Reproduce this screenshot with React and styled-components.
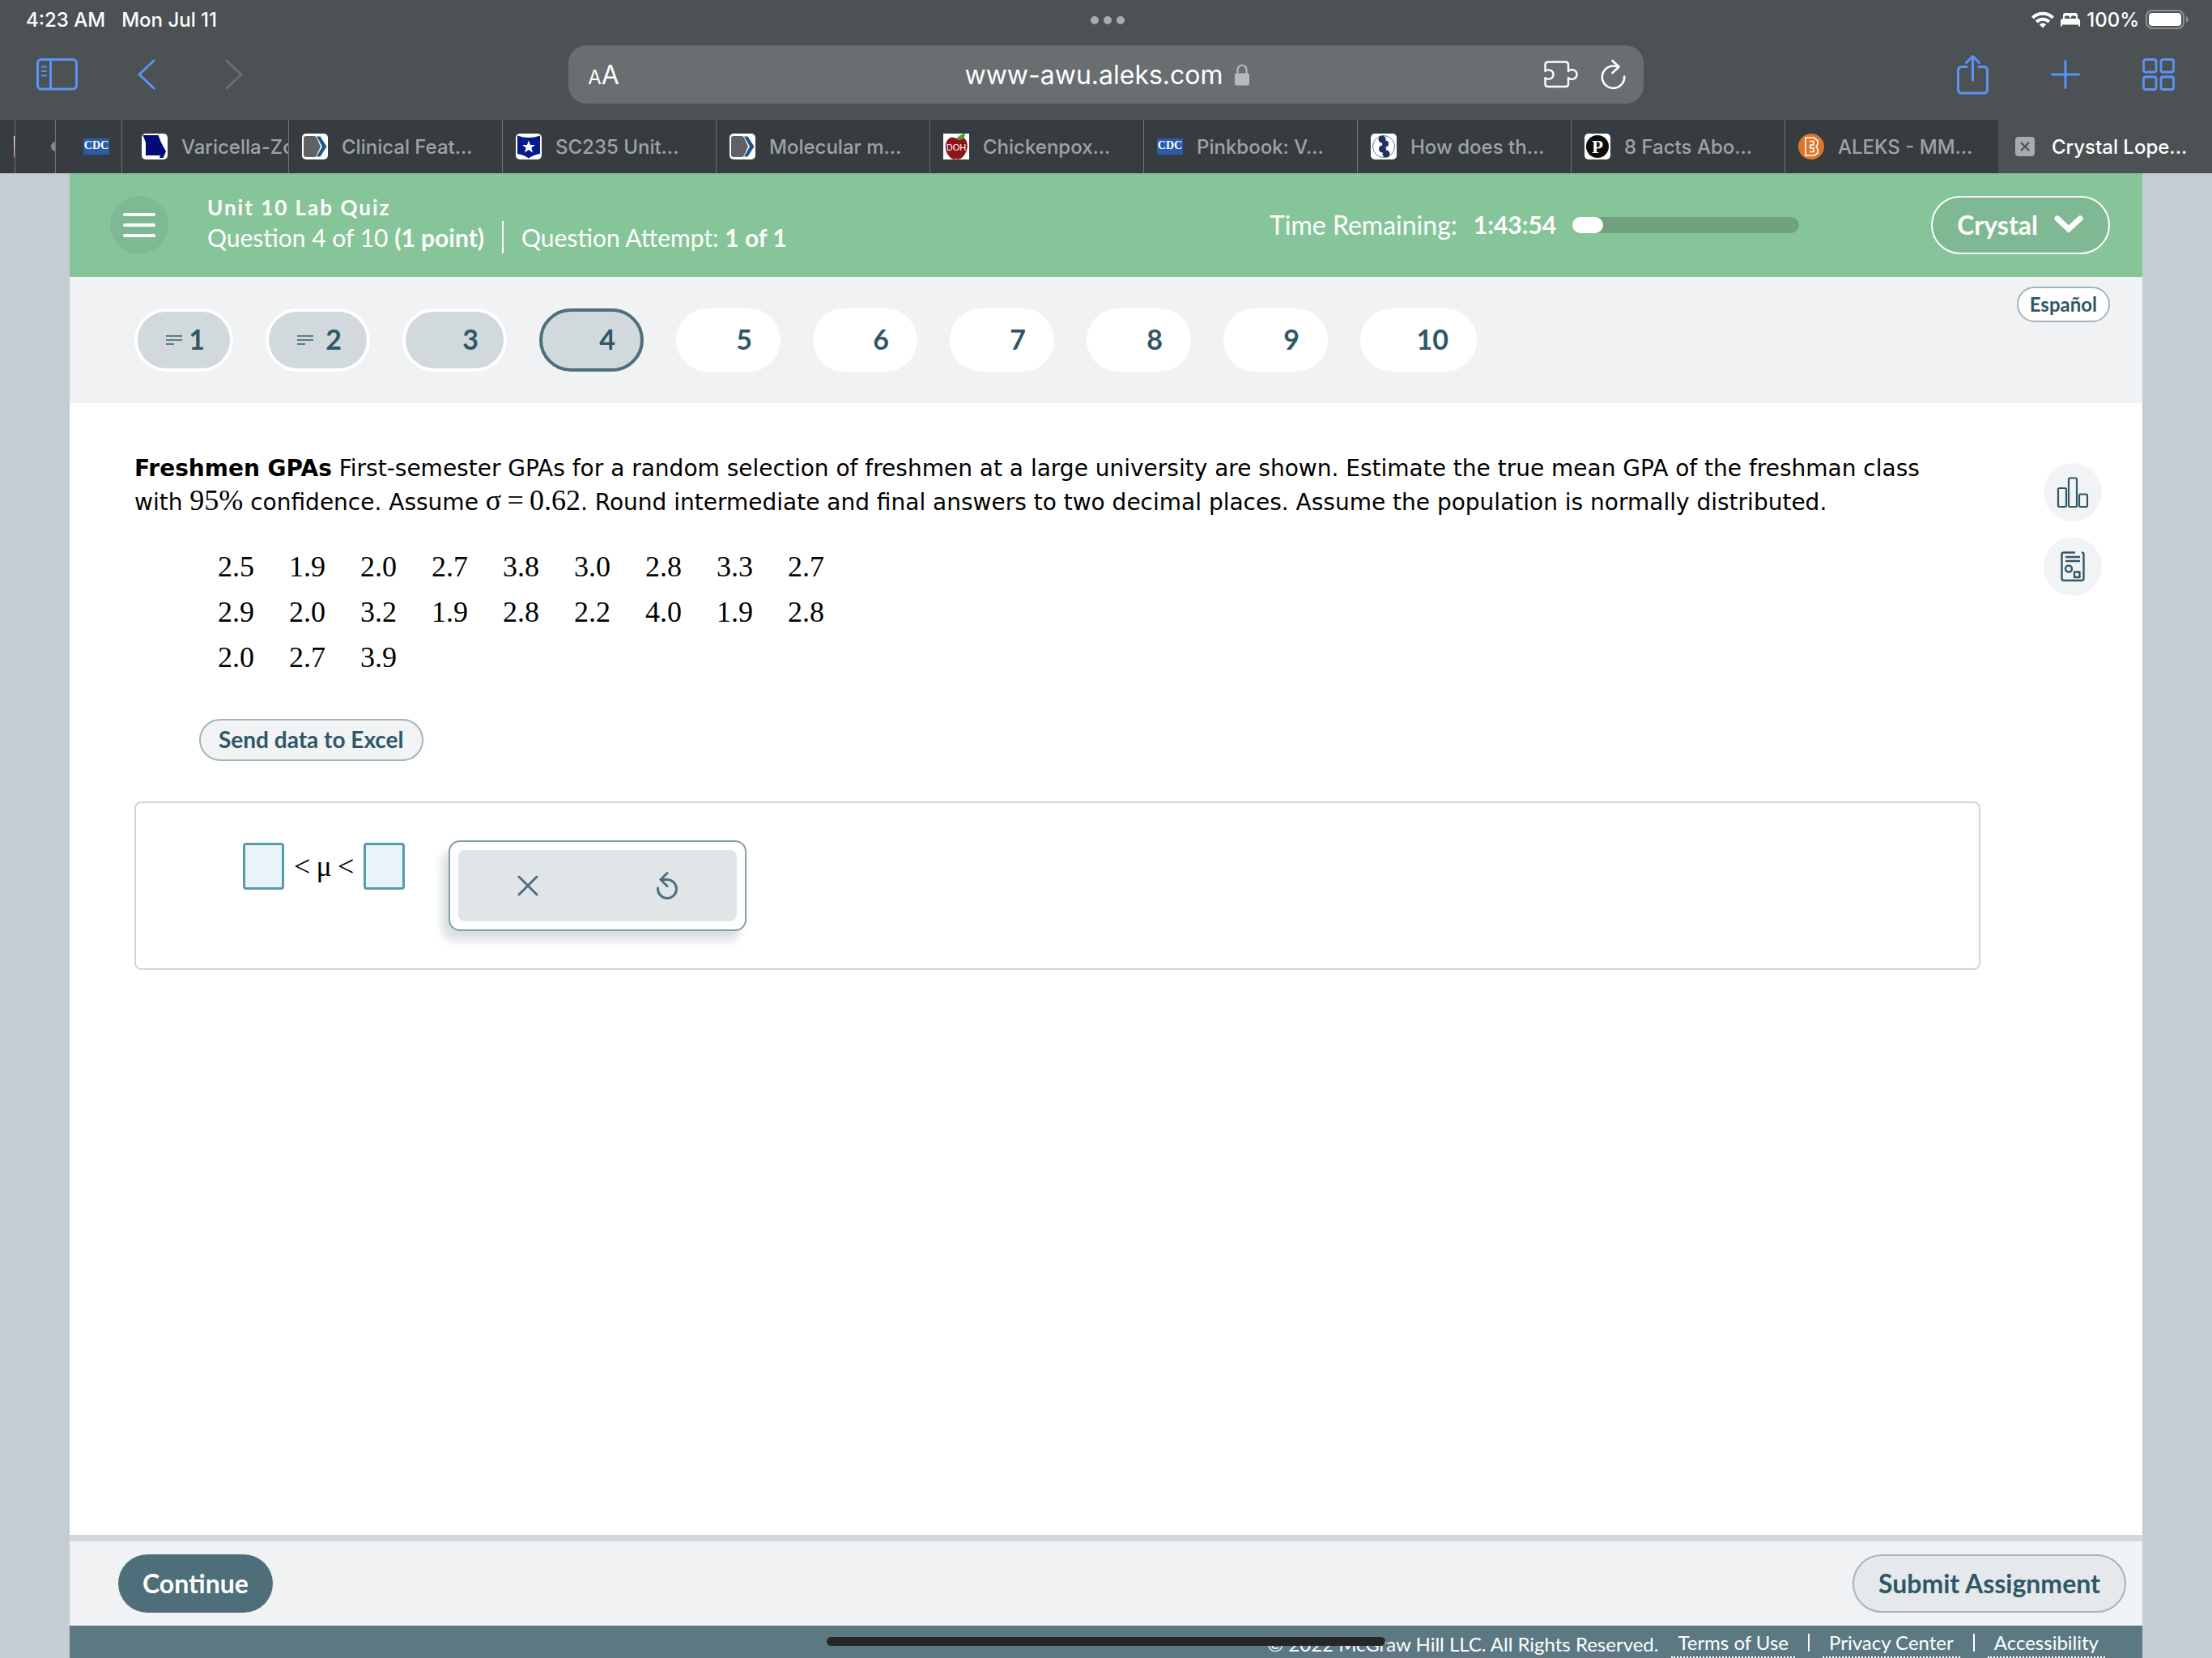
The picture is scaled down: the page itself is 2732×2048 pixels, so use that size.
import React from "react";
import styled, { createGlobalStyle, css } from "styled-components";

const SYSTEM = `Inter, "Liberation Sans", sans-serif`;
const BRAND = `Lato, "Liberation Sans", sans-serif`;
const BODY = `"DejaVu Sans", Verdana, sans-serif`;
const MATH = `"Liberation Serif", "Times New Roman", serif`;

const ink = "#2f5767";
const blue = "#5b93f7";

const GlobalStyle = createGlobalStyle`
  *, *::before, *::after { box-sizing: border-box; }
  body { margin: 0; background: #c3cdd2; font-family: ${BRAND}; }
  button { font: inherit; color: inherit; padding: 0; border: 0; background: none; cursor: pointer; }
  svg { display: block; flex: none; }
`;

const Page = styled.div`
  position: relative;
  display: flex;
  flex-direction: column;
  min-height: 100vh;
  overflow: hidden;
`;

/* ---------- browser chrome ---------- */

const Chrome = styled.header`
  background: #4c5154;
  color: #fff;
  font-family: ${SYSTEM};
`;

const StatusBar = styled.div`
  display: grid;
  grid-template-columns: 1fr auto 1fr;
  align-items: center;
  height: 48px;
  padding: 0 28px 0 32px;
  font-size: 24px;
  font-weight: 500;
`;

const StatusGroup = styled.div`
  display: flex;
  align-items: center;
  gap: ${(p) => p.$gap}px;
  justify-content: ${(p) => (p.$end ? "flex-end" : "flex-start")};
`;

const Toolbar = styled.nav`
  display: grid;
  grid-template-columns: 1fr 48.6% 1fr;
  align-items: center;
  padding: 8px 0 20px;
`;

const ToolGroup = styled.div`
  display: flex;
  align-items: center;
  justify-content: ${(p) => (p.$end ? "flex-end" : "flex-start")};
  gap: ${(p) => (p.$end ? 67 : 60)}px;
  padding: 0 42px 0 45px;
`;

const ToolButton = styled.button`
  display: flex;
  justify-content: center;
  min-width: 48px;
`;

const AddressBar = styled.div`
  display: grid;
  grid-template-columns: 1fr auto 1fr;
  align-items: center;
  height: 72px;
  padding: 0 22px 0 24px;
  border-radius: 22px;
  background: #696e70;
`;

const ReaderButton = styled.button`
  justify-self: start;
  font-size: 32px;
  small { font-size: 24px; }
`;

const UrlButton = styled.button`
  display: flex;
  align-items: center;
  gap: 14px;
  font-size: 32px;
`;

const AddressActions = styled.div`
  display: flex;
  align-items: center;
  justify-content: flex-end;
  gap: 28px;
`;

const TabStrip = styled.div`
  display: flex;
  height: 66px;
  background: #363c3f;
`;

const Tab = styled.button`
  display: flex;
  align-items: center;
  flex: ${(p) => (p.$width ? `0 0 ${p.$width}px` : "1 1 200px")};
  min-width: 0;
  gap: 17px;
  padding-left: ${(p) => p.$inset ?? 16}px;
  overflow: hidden;
  white-space: nowrap;
  font-size: 24px;
  font-weight: 500;
  color: #9da4a7;
  & + & { border-left: 1px solid #6d7679; }
  ${(p) =>
    p.$active &&
    css`
      gap: 21px;
      color: #fff;
      background: #4c5154;
      && { border-left-color: #4c5154; }
    `}
`;

const CdcBadge = styled.span`
  flex: none;
  width: 32px;
  height: 20px;
  font: 700 14px/18px ${MATH};
  text-align: center;
  color: #fff;
  background: #2c5ba9;
`;

const HiddenMark = styled.span`
  flex: none;
  width: ${(p) => p.$width}px;
  height: ${(p) => p.$height}px;
  border-radius: ${(p) => p.$radius};
  background: ${(p) => p.$fill};
`;

/* ---------- quiz ---------- */

const Sheet = styled.div`
  flex: 1;
  display: flex;
  flex-direction: column;
  width: calc(100% - 172px);
  margin: 0 auto;
  background: #fff;
  color: ${ink};
`;

const QuizHeader = styled.header`
  display: flex;
  align-items: center;
  height: 128px;
  padding: 0 40px 0 50px;
  background: #86c59a;
  color: #fff;
  font-size: 30px;
`;

const MenuButton = styled.button`
  display: grid;
  place-items: center;
  width: 72px;
  height: 72px;
  border-radius: 50%;
  background: #7fb993;
`;

const QuizTitles = styled.div`
  flex: 1;
  margin-left: 48px;
  padding-bottom: 4px;
`;

const QuizName = styled.h1`
  margin: 0;
  font-size: 26px;
  line-height: 34px;
  font-weight: 700;
  letter-spacing: 2px;
`;

const QuizMeta = styled.div`
  display: flex;
  line-height: 40px;
  span + span {
    margin-left: 22px;
    padding-left: 22px;
    border-left: 2px solid #fff;
  }
`;

const Timer = styled.div`
  display: flex;
  align-items: center;
  gap: 20px;
`;

const TimeLabel = styled.span`
  padding-bottom: 2px;
  font-size: 32px;
`;

const TimeLeft = styled.b`
  padding-bottom: 2px;
`;

const TimeTrack = styled.div`
  width: 280px;
  height: 20px;
  border-radius: 10px;
  background: #71a17f;
`;

const TimeFill = styled.div`
  height: 20px;
  border-radius: 10px;
  background: #fff;
`;

const UserButton = styled.button`
  display: flex;
  align-items: center;
  gap: 20px;
  height: 72px;
  margin-left: 163px;
  padding: 0 31px 2px 30px;
  border: 2px solid #fff;
  border-radius: 36px;
  background: #7fb993;
  font-size: 32px;
  font-weight: 700;
`;

const QuestionNav = styled.nav`
  display: flex;
  justify-content: space-between;
  align-items: flex-start;
  height: 156px;
  padding: 0 40px 0 80px;
  background: #f0f2f4;
`;

const PillList = styled.div`
  display: flex;
  gap: 40px;
  padding-top: 39px;
`;

const Pill = styled.button`
  display: flex;
  align-items: center;
  justify-content: space-between;
  width: ${(p) => p.$width}px;
  height: 78px;
  padding: 0 31px 0 35px;
  border: 4px solid ${(p) => (p.$current ? "#4e6e79" : "#fff")};
  border-radius: 39px;
  background: ${(p) => (p.$seen ? "#d1d9dc" : "#fff")};
  font-size: 34px;
  font-weight: 700;
  color: ${ink};
`;

const PillNumber = styled.span`
  margin-left: auto;
  padding-bottom: 4px;
`;

const OutlineButton = styled.button`
  height: ${(p) => p.$height}px;
  padding: 0 ${(p) => p.$pad}px 2px;
  border: 2px solid #a3b5bc;
  border-radius: 36px;
  background: ${(p) => p.$fill};
  font-size: ${(p) => p.$size}px;
  font-weight: 700;
  color: ${ink};
`;

const LanguageSlot = styled.div`
  padding-top: 12px;
`;

const Workspace = styled.main`
  flex: 1;
  display: flex;
  justify-content: space-between;
  gap: 78px;
  padding: 60px 50px 0 80px;
`;

const Problem = styled.section`
  flex: 1;
  min-width: 0;
`;

const Prompt = styled.p`
  margin: 0 0 30px;
  padding-right: 50px;
  font: 28px/42px ${BODY};
  color: #000;
`;

const Formula = styled.span`
  font: 36px/36px ${MATH};
`;

const DataTable = styled.table`
  margin-left: 103px;
  border-collapse: collapse;
  font: 36px/56px ${MATH};
  color: #000;
  td { width: 88px; padding: 0; }
`;

const ExportRow = styled.div`
  padding: 48px 0 50px 80px;
`;

const AnswerBox = styled.form`
  display: flex;
  align-items: flex-start;
  gap: 54px;
  padding: 46px 132px;
  border: 2px solid #cfd7da;
  border-radius: 8px;
`;

const Interval = styled.div`
  display: flex;
  align-items: center;
  gap: 12px;
  padding-top: 3px;
  font: 36px/58px ${MATH};
  color: #000;
`;

const AnswerInput = styled.input`
  width: 51px;
  height: 58px;
  padding: 4px;
  border: 3px solid #559cab;
  border-radius: 4px;
  background: #e8f4fa;
  font: 30px ${MATH};
  text-align: center;
`;

const Keypad = styled.div`
  display: flex;
  width: 368px;
  height: 112px;
  padding: 10px;
  border: 2px solid #84a0aa;
  border-radius: 14px;
  background: #fff;
  box-shadow: -8px 12px 12px #d9dfe2;
`;

const Key = styled.button`
  flex: 1;
  display: grid;
  place-items: center;
  background: #e0e5e7;
  &:first-child { border-radius: 8px 0 0 8px; }
  &:last-child { border-radius: 0 8px 8px 0; }
`;

const SideTools = styled.aside`
  display: flex;
  flex-direction: column;
  gap: 20px;
  padding-top: 14px;
`;

const SideButton = styled.button`
  display: grid;
  place-items: center;
  width: 72px;
  height: 72px;
  border-radius: 50%;
  background: #f2f3f5;
`;

const ActionBar = styled.div`
  display: flex;
  align-items: center;
  justify-content: space-between;
  height: 112px;
  padding: 0 20px 0 60px;
  border-top: 8px solid #d1d9db;
  background: #f0f2f4;
`;

const PrimaryButton = styled.button`
  height: 72px;
  padding: 0 30px 2px;
  border-radius: 36px;
  background: #4e6e79;
  color: #fff;
  font-size: 32px;
  font-weight: 700;
`;

const Legal = styled.footer`
  display: flex;
  justify-content: flex-end;
  align-items: flex-start;
  height: 40px;
  padding: 6px 46px 0 0;
  background: #5c7983;
  color: #fff;
  font-size: 24px;
  line-height: 30px;
  overflow: hidden;
`;

const Copyright = styled.span`
  margin-right: 16px;
  padding-top: 2px;
`;

const LegalLink = styled.a`
  padding: 0 8px 2px;
  border-bottom: 2px dotted #fff;
  color: inherit;
  text-decoration: none;
`;

const LegalDivider = styled.span`
  width: 2px;
  height: 22px;
  margin: 4px 16px 0;
  background: #fff;
`;

const HomeIndicator = styled.div`
  position: absolute;
  left: 50%;
  bottom: 15px;
  width: 690px;
  height: 11px;
  margin-left: -345px;
  border-radius: 6px;
  background: #262626;
`;

/* ---------- drawings ---------- */

const line = (width, color = "currentColor") => ({
  fill: "none",
  stroke: color,
  strokeWidth: width,
  strokeLinecap: "round",
  strokeLinejoin: "round",
});

const DotsIcon = () => (
  <svg width="44" height="12" fill="#a9acae">
    <circle cx="6" cy="7" r="5" /><circle cx="22" cy="7" r="5" /><circle cx="38" cy="7" r="5" />
  </svg>
);

const WifiIcon = () => (
  <svg width="28" height="21" viewBox="0 0 28 21" fill="none" stroke="#fff" strokeWidth="4">
    <path d="M1.5 8 A17.5 17.5 0 0 1 26.500 8" />
    <path d="M6.200 13 A11 11 0 0 1 21.800 13" />
    <path d="M14 20.500 L9.800 16.200 A6 6 0 0 1 18.200 16.200 Z" fill="#fff" stroke="none" />
  </svg>
);

const BedIcon = () => (
  <svg width="24" height="18" viewBox="0 0 24 18" fill="#fff">
    <path d="M3 8 V4 Q3 1 6 1 H18 Q21 1 21 4 V8 H19 V6 Q19 4.500 17.500 4.500 H14.500 Q13 4.500 13 6 V7 H11 V6 Q11 4.500 9.500 4.500 H6.500 Q5 4.500 5 6 V8 Z" />
    <path d="M0 11 Q0 8 3 8 H21 Q24 8 24 11 V17.500 H22 V15.500 H2 V17.500 H0 Z" />
  </svg>
);

const BatteryIcon = () => (
  <svg width="54" height="24" viewBox="0 0 54 24">
    <rect x="1" y="1" width="46" height="22" rx="7" fill="none" stroke="#8d9193" strokeWidth="2" />
    <rect x="4" y="4" width="40" height="16" rx="4" fill="#fff" />
    <path d="M50 8 Q53 9.500 53 12 Q53 14.500 50 16 Z" fill="#8d9193" />
  </svg>
);

const SidebarIcon = () => (
  <svg width="52" height="40" viewBox="0 0 52 40" {...line(3, blue)}>
    <rect x="1.500" y="1.500" width="48" height="36.500" rx="4.500" />
    <path d="M17.500 2 V38" />
    <path d="M7 10.500 h5 M7 16 h5 M7 21.500 h5" strokeWidth="2" />
  </svg>
);

const ChevronIcon = ({ flip, color }) => (
  <svg width="24" height="40" viewBox="0 0 24 40" {...line(3, color)}>
    <path d={flip ? "M3 3 L21 20 L3 37" : "M21 3 L3 20 L21 37"} />
  </svg>
);

const LockIcon = () => (
  <svg width="18" height="27" viewBox="0 0 18 27">
    <rect x="0" y="11.500" width="18" height="15" rx="2.500" fill="#b9babd" />
    <path d="M3.500 12 V7 a5.500 5.500 0 0 1 11 0 V12" fill="none" stroke="#b9babd" strokeWidth="2.200" />
  </svg>
);

const PuzzleIcon = () => (
  <svg width="42" height="34" viewBox="0 0 42 34" {...line(2.4)}>
    <path d="M30 13 V5 Q30 1.500 26.500 1.500 H5 Q1.500 1.500 1.500 5 V13 C3 10.500 11.500 10.500 11.500 17 C11.500 23.500 3 23.500 1.500 21 V29 Q1.500 32 5 32 H26.500 Q30 32 30 29 V21 C32 24 40.500 23.500 40.500 17 C40.500 10.500 32 10 30 13 Z" />
  </svg>
);

const ReloadIcon = () => (
  <svg width="31" height="38" viewBox="0 0 31 38" {...line(2.6)}>
    <path d="M22 9.500 Q19 8.500 15.500 8.500 A13.700 13.700 0 1 0 29.200 21.500" />
    <path d="M14.500 2 L22.500 9.500 L14.500 17" />
  </svg>
);

const ShareIcon = () => (
  <svg width="39" height="50" viewBox="0 0 39 50" {...line(3, blue)}>
    <path d="M12 15.500 H6 Q1.500 15.500 1.500 20 V43.500 Q1.500 48 6 48 H33 Q37.500 48 37.500 43.500 V20 Q37.500 15.500 33 15.500 H27" />
    <path d="M19.500 32 V3 M11.500 10.500 L19.500 2.500 L27.500 10.500" />
  </svg>
);

const PlusIcon = () => (
  <svg width="36" height="36" viewBox="0 0 36 36" {...line(3, blue)}>
    <path d="M18 1.500 V34.500 M1.500 18 H34.500" />
  </svg>
);

const GridIcon = () => (
  <svg width="40" height="40" viewBox="0 0 40 40" {...line(2.8, blue)}>
    <rect x="1.500" y="1.500" width="15.500" height="15.500" rx="2.500" />
    <rect x="23" y="1.500" width="15.500" height="15.500" rx="2.500" />
    <rect x="1.500" y="23" width="15.500" height="15.500" rx="2.500" />
    <rect x="23" y="23" width="15.500" height="15.500" rx="2.500" />
  </svg>
);

const Favicon = ({ children }) => (
  <svg width="32" height="32" viewBox="0 0 32 32">
    <rect width="32" height="32" rx="5" fill="#fff" />
    {children}
  </svg>
);

const GeorgiaIcon = () => (
  <Favicon><path d="M1.500 2 H20.500 L24 11 L30 22 L26.500 30 H22 L23 27 H5 V11 Z" fill="#020a78" /></Favicon>
);

const ChevronTagIcon = () => (
  <Favicon>
    <path d="M5 3 H15 Q17 3 18 5 L23 16 L18 27 Q17 29 15 29 H5 Q2 29 2 26 V6 Q2 3 5 3 Z" fill="#616065" />
    <path d="M18 3.500 H22.500 L30.500 16 L22.500 28.500 H18 L25 16 Z" fill="#20558f" />
  </Favicon>
);

const StarShieldIcon = () => (
  <Favicon>
    <path d="M2 2.500 Q9 5 16 5 Q23 5 30 2.500 V25 Q22 26 16 30.500 Q10 26 2 25 Z" fill="#071a8c" />
    <path d="M16 8.500 L18 14 H24 L19.300 17.500 L21 23.500 L16 20 L11 23.500 L12.700 17.500 L8 14 H14 Z" fill="#fff" />
  </Favicon>
);

const AppleIcon = () => (
  <svg width="32" height="32" viewBox="0 0 32 32">
    <rect width="32" height="32" fill="#fff" />
    <path d="M16 6 Q25 1 29 10 Q32 20 24 29 Q20 33 16 31 Q12 33 8 29 Q0 20 4 10 Q8 2 16 6 Z" fill="#8d1418" />
    <path d="M17 8 Q18 1 27 0 Q27 7 20 8 Z" fill="#4d9a35" />
    <text x="16" y="21" textAnchor="middle" fontFamily="Liberation Sans, sans-serif" fontSize="11" fill="#fff">DOH</text>
  </svg>
);

const BeadsIcon = () => (
  <Favicon>
    <circle cx="16" cy="16" r="13.500" fill="#fff" stroke="#6d789c" strokeWidth="1" />
    <g fill="#22305f"><circle cx="14" cy="7" r="4.500" /><circle cx="18" cy="12.500" r="4" /><circle cx="14.500" cy="19" r="4.500" /><circle cx="19" cy="25" r="4.500" /></g>
  </Favicon>
);

const ParadeIcon = () => (
  <Favicon>
    <circle cx="16" cy="16" r="14" fill="#0c0c0c" />
    <text x="16" y="24" textAnchor="middle" fontFamily="Liberation Serif, serif" fontWeight="700" fontSize="23" fill="#fff">P</text>
  </Favicon>
);

const BIcon = () => (
  <svg width="32" height="32" viewBox="0 0 32 32">
    <circle cx="16" cy="16" r="16" fill="#d9782d" />
    <g fill="none" stroke="#fff" strokeWidth="1.600">
      <path d="M9 5 H19 L24 9 V13 L22 16 L24 19 V24 L20 27 H9 Z" />
      <path d="M14 9.500 H19 V14 H15 V18 H19 V22.500 H14" />
    </g>
  </svg>
);

const CloseTabIcon = () => (
  <svg width="24" height="24" viewBox="0 0 24 24">
    <rect width="24" height="24" rx="4" fill="#a6abad" />
    <path d="M7.500 7.500 L16.500 16.500 M16.500 7.500 L7.500 16.500" stroke="#4c5154" strokeWidth="2.200" strokeLinecap="round" />
  </svg>
);

const MenuIcon = () => (
  <svg width="40" height="32" viewBox="0 0 40 32" {...line(4, "#fff")}>
    <path d="M2 3 H38 M2 16 H38 M2 29 H38" />
  </svg>
);

const CaretIcon = () => (
  <svg width="36" height="24" viewBox="0 0 36 24" {...line(7, "#fff")}>
    <path d="M4 5 L18 18 L32 5" strokeLinejoin="miter" />
  </svg>
);

const NotesIcon = () => (
  <svg width="20" height="14" viewBox="0 0 20 14" stroke="#5b7d89" strokeWidth="2">
    <path d="M0 2 H20 M0 7 H20 M0 12 H10" />
  </svg>
);

const ClearIcon = () => (
  <svg width="28" height="28" viewBox="0 0 28 28" {...line(3, "#4e707c")}>
    <path d="M3 3 L25 25 M25 3 L3 25" />
  </svg>
);

const UndoIcon = () => (
  <svg width="28" height="34" viewBox="0 0 28 34" {...line(3, "#4e707c")}>
    <path d="M2.500 20 A11.500 11.500 0 1 0 14 9.500 H6" />
    <path d="M14 1.500 L6 9.500 L14 17.500" />
  </svg>
);

const ChartIcon = () => (
  <svg width="40" height="38" viewBox="0 0 40 38" {...line(2.2, ink)}>
    <rect x="2" y="14" width="10" height="23" rx="1.500" />
    <rect x="15" y="1.500" width="10" height="35.500" rx="1.500" />
    <rect x="28" y="21.500" width="10" height="15.500" rx="1.500" />
  </svg>
);

const DocumentIcon = () => (
  <svg width="30" height="38" viewBox="0 0 30 38" {...line(2.4, ink)}>
    <path d="M18 1.500 H4 Q1.500 1.500 1.500 4 V33.500 Q1.500 36 4 36 H26 Q28.500 36 28.500 33.500 V4 Q28.500 1.500 26 1.500" strokeLinecap="butt" />
    <path d="M7 7 H23 M7 12 H23" />
    <circle cx="10" cy="21.500" r="4" />
    <rect x="17" y="25.500" width="6.500" height="6.500" />
  </svg>
);

/* ---------- data ---------- */

const tabs = [
  { label: "Clinical Feat...", icon: <ChevronTagIcon /> },
  { label: "SC235 Unit...", icon: <StarShieldIcon /> },
  { label: "Molecular m...", icon: <ChevronTagIcon /> },
  { label: "Chickenpox...", icon: <AppleIcon /> },
  { label: "Pinkbook: V...", icon: <CdcBadge>CDC</CdcBadge> },
  { label: "How does th...", icon: <BeadsIcon /> },
  { label: "8 Facts Abo...", icon: <ParadeIcon /> },
  { label: "ALEKS - MM...", icon: <BIcon /> },
];

const questions = [
  { n: 1, width: 122, seen: true, notes: true },
  { n: 2, width: 129, seen: true, notes: true },
  { n: 3, width: 129, seen: true },
  { n: 4, width: 129, seen: true, current: true },
  ...[5, 6, 7, 8, 9].map((n) => ({ n, width: 129 })),
  { n: 10, width: 144 },
];

const gpas = [
  ["2.5", "1.9", "2.0", "2.7", "3.8", "3.0", "2.8", "3.3", "2.7"],
  ["2.9", "2.0", "3.2", "1.9", "2.8", "2.2", "4.0", "1.9", "2.8"],
  ["2.0", "2.7", "3.9"],
];

function BrowserChrome() {
  return (
    <Chrome>
      <StatusBar>
        <StatusGroup $gap={20}><span>4:23 AM</span><span>Mon Jul 11</span></StatusGroup>
        <DotsIcon />
        <StatusGroup $gap={8} $end><WifiIcon /><BedIcon /><span>100%</span><BatteryIcon /></StatusGroup>
      </StatusBar>
      <Toolbar>
        <ToolGroup>
          <ToolButton aria-label="Sidebar"><SidebarIcon /></ToolButton>
          <ToolButton aria-label="Back"><ChevronIcon color={blue} /></ToolButton>
          <ToolButton aria-label="Forward"><ChevronIcon flip color="#696e70" /></ToolButton>
        </ToolGroup>
        <AddressBar>
          <ReaderButton aria-label="Page settings"><small>A</small>A</ReaderButton>
          <UrlButton>www-awu.aleks.com<LockIcon /></UrlButton>
          <AddressActions>
            <button aria-label="Extensions"><PuzzleIcon /></button>
            <button aria-label="Reload"><ReloadIcon /></button>
          </AddressActions>
        </AddressBar>
        <ToolGroup $end>
          <ToolButton aria-label="Share"><ShareIcon /></ToolButton>
          <ToolButton aria-label="New tab"><PlusIcon /></ToolButton>
          <ToolButton aria-label="Tab overview"><GridIcon /></ToolButton>
        </ToolGroup>
      </Toolbar>
      <TabStrip>
        <Tab $width={18} $inset={17} aria-label="Tab"><HiddenMark $width={1} $height={26} $radius="0" $fill="linear-gradient(#fff, #d88)" /></Tab>
        <Tab $width={50} $inset={44} aria-label="Tab"><HiddenMark $width={12} $height={12} $radius="50%" $fill="#85898b" /></Tab>
        <Tab $width={82} $inset={34}><CdcBadge>CDC</CdcBadge></Tab>
        <Tab $width={206} $inset={24}><GeorgiaIcon />Varicella-Zo</Tab>
        {tabs.map((tab) => (
          <Tab key={tab.label}>{tab.icon}{tab.label}</Tab>
        ))}
        <Tab $active $inset={20}><CloseTabIcon />Crystal Lope...</Tab>
      </TabStrip>
    </Chrome>
  );
}

export default function App() {
  return (
    <Page>
      <GlobalStyle />
      <BrowserChrome />
      <Sheet>
        <QuizHeader>
          <MenuButton aria-label="Menu"><MenuIcon /></MenuButton>
          <QuizTitles>
            <QuizName>Unit 10 Lab Quiz</QuizName>
            <QuizMeta>
              <span>Question 4 of 10 <b>(1 point)</b></span>
              <span>Question Attempt: <b>1 of 1</b></span>
            </QuizMeta>
          </QuizTitles>
          <Timer>
            <TimeLabel>Time Remaining:</TimeLabel>
            <TimeLeft>1:43:54</TimeLeft>
            <TimeTrack role="progressbar" aria-label="Time used" aria-valuenow={13} aria-valuemin={0} aria-valuemax={100}>
              <TimeFill style={{ width: "13.6%" }} />
            </TimeTrack>
          </Timer>
          <UserButton>Crystal<CaretIcon /></UserButton>
        </QuizHeader>
        <QuestionNav>
          <PillList>
            {questions.map((q) => (
              <Pill key={q.n} $width={q.width} $seen={q.seen} $current={q.current}>
                {q.notes && <NotesIcon />}
                <PillNumber>{q.n}</PillNumber>
              </Pill>
            ))}
          </PillList>
          <LanguageSlot>
            <OutlineButton $height={44} $pad={14} $size={24} $fill="#fff">Español</OutlineButton>
          </LanguageSlot>
        </QuestionNav>
        <Workspace>
          <Problem>
            <Prompt>
              <b>Freshmen GPAs</b> First-semester GPAs for a random selection of freshmen at a large university are shown.
              Estimate the true mean GPA of the freshman class with <Formula>95%</Formula> confidence. Assume{" "}
              <Formula>σ&thinsp;=&thinsp;0.62</Formula>. Round intermediate and final answers to two decimal places. Assume the
              population is normally distributed.
            </Prompt>
            <DataTable>
              <tbody>
                {gpas.map((row, r) => (
                  <tr key={r}>{row.map((value, c) => <td key={c}>{value}</td>)}</tr>
                ))}
              </tbody>
            </DataTable>
            <ExportRow>
              <OutlineButton $height={52} $pad={22} $size={28} $fill="#f2f3f5">Send data to Excel</OutlineButton>
            </ExportRow>
            <AnswerBox onSubmit={(e) => e.preventDefault()}>
              <Interval>
                <AnswerInput aria-label="Lower bound" />
                <span>&lt;&thinsp;μ&thinsp;&lt;</span>
                <AnswerInput aria-label="Upper bound" />
              </Interval>
              <Keypad>
                <Key type="reset" aria-label="Clear"><ClearIcon /></Key>
                <Key type="button" aria-label="Undo"><UndoIcon /></Key>
              </Keypad>
            </AnswerBox>
          </Problem>
          <SideTools>
            <SideButton aria-label="Statistics"><ChartIcon /></SideButton>
            <SideButton aria-label="Resources"><DocumentIcon /></SideButton>
          </SideTools>
        </Workspace>
        <ActionBar>
          <PrimaryButton>Continue</PrimaryButton>
          <OutlineButton $height={72} $pad={30} $size={32} $fill="#e5e9ec">Submit Assignment</OutlineButton>
        </ActionBar>
        <Legal>
          <Copyright>© 2022 McGraw Hill LLC. All Rights Reserved.</Copyright>
          <LegalLink href="#terms">Terms of Use</LegalLink>
          <LegalDivider />
          <LegalLink href="#privacy">Privacy Center</LegalLink>
          <LegalDivider />
          <LegalLink href="#accessibility">Accessibility</LegalLink>
        </Legal>
      </Sheet>
      <HomeIndicator />
    </Page>
  );
}
